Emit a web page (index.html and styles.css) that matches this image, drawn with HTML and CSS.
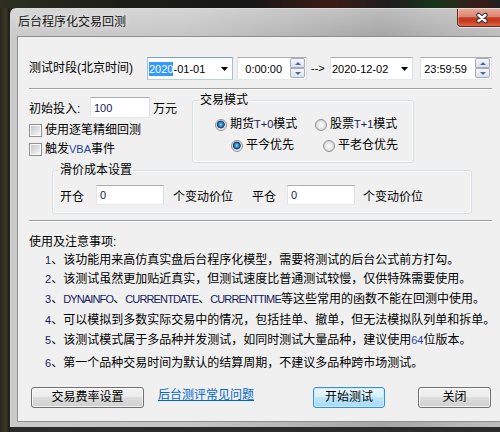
FILE: index.html
```html
<!DOCTYPE html>
<html lang="zh-CN">
<head>
<meta charset="utf-8">
<title>后台程序化交易回测</title>
<link rel="stylesheet" href="styles.css">
</head>
<body>
<div class="desk">
  <div class="win">
    <div class="titlebar">
      <span class="title">后台程序化交易回测</span>
      <div class="close">
        <svg width="14" height="12" viewBox="0 0 14 12"><path d="M3.5 3L10.5 9M10.5 3L3.5 9" stroke="#3a3a3a" stroke-width="4.6" stroke-linecap="round" fill="none"/><path d="M3.5 3L10.5 9M10.5 3L3.5 9" stroke="#ffffff" stroke-width="2.4" stroke-linecap="round" fill="none"/></svg>
      </div>
    </div>
    <div class="client">
      <div class="row1">
        <span class="lbl">测试时段(北京时间)</span>
        <div class="box dt dt1"><span class="en"><span class="sel">2020</span>-01-01</span><svg class="dd" width="7" height="4" viewBox="0 0 7 4"><path d="M0 0H7L3.5 4Z" fill="#000"/></svg></div>
        <div class="box tm tm1"><span class="en t">0:00:00</span><div class="spin"><div class="up"></div><div class="dn"></div></div></div>
        <span class="en to">--&gt;</span>
        <div class="box dt dt2"><span class="en">2020-12-02</span><svg class="dd" width="7" height="4" viewBox="0 0 7 4"><path d="M0 0H7L3.5 4Z" fill="#000"/></svg></div>
        <div class="box tm tm2"><span class="en t">23:59:59</span><div class="spin"><div class="up"></div><div class="dn"></div></div></div>
      </div>
      <div class="sep s1"></div>
      <div class="row2">
        <div class="left">
          <div class="invest">
            <span class="lbl2">初始投入:</span>
            <div class="box inp w60"><span class="en nv">100</span></div>
            <span class="unit">万元</span>
          </div>
          <div class="chk first"><span class="cb"></span><span>使用逐笔精细回测</span></div>
          <div class="chk"><span class="cb"></span><span>触发<span class="en vba">VBA</span>事件</span></div>
        </div>
        <div class="group g1">
          <span class="gt">交易模式</span>
          <div class="rrow r1">
            <span class="ri w100"><span class="rd on"></span>期货<span class="en nv">T+0</span>模式</span>
            <span class="ri"><span class="rd"></span>股票<span class="en nv">T+1</span>模式</span>
          </div>
          <div class="rrow r2">
            <span class="ri w92"><span class="rd on"></span>平今优先</span>
            <span class="ri"><span class="rd"></span>平老仓优先</span>
          </div>
        </div>
      </div>
      <div class="group g2">
        <span class="gt">滑价成本设置</span>
        <div class="grow">
          <span>开仓</span>
          <div class="box inp inp2 m12"><span class="en nv">0</span></div>
          <span class="m9">个变动价位</span>
          <span class="m19">平仓</span>
          <div class="box inp inp2 m11"><span class="en nv">0</span></div>
          <span class="m8">个变动价位</span>
        </div>
      </div>
      <div class="sep s2"></div>
      <div class="notes">
        <div class="nh">使用及注意事项:</div>
        <div class="nl l1"><span class="en nv">1</span>、该功能用来高仿真实盘后台程序化模型，需要将测试的后台公式前方打勾。</div>
        <div class="nl l2"><span class="en nv">2</span>、该测试虽然更加贴近真实，但测试速度比普通测试较慢，仅供特殊需要使用。</div>
        <div class="nl l3"><span class="en nv">3</span>、<span class="en nv caps">DYNAINFO</span>、<span class="en nv caps">CURRENTDATE</span>、<span class="en nv caps">CURRENTTIME</span>等这些常用的函数不能在回测中使用。</div>
        <div class="nl l4"><span class="en nv">4</span>、可以模拟到多数实际交易中的情况，包括挂单、撤单，但无法模拟队列单和拆单。</div>
        <div class="nl l5"><span class="en nv">5</span>、该测试模式属于多品种并发测试，如同时测试大量品种，建议使用<span class="en vba">64</span>位版本。</div>
        <div class="nl l6"><span class="en nv">6</span>、第一个品种交易时间为默认的结算周期，不建议多品种跨市场测试。</div>
      </div>
      <div class="btns">
        <div class="btn b1">交易费率设置</div>
        <span class="link">后台测评常见问题</span>
        <div class="btn def b2">开始测试</div>
        <div class="btn b3">关闭</div>
      </div>
    </div>
  </div>
</div>
</body>
</html>
```
FILE: styles.css
```css
* { box-sizing: border-box; }
html, body { margin: 0; padding: 0; }
body {
  width: 500px;
  height: 432px;
  overflow: hidden;
  background: #2a2a2a;
  font-family: "Liberation Sans", "Noto Sans CJK SC", sans-serif;
  font-size: 12px;
  color: #000;
}
.desk {
  height: 432px;
  padding: 8px 0 0 10px;
  background:
    linear-gradient(90deg, #2c2f22 0%, #1c1d17 25%, #171717 50%, #3b1c17 66%, #1d1d1d 78%, #17351c 87%, #3a1a16 96%, #1f1f1f 100%) left top / 100% 8px no-repeat,
    linear-gradient(90deg, #262519 0%, #3a3826 55%, #1b1b15 100%) left top / 10px 100% no-repeat,
    #2b2b2b;
}
.win {
  width: 496px;
  height: 419px;
  border-top: 1px solid #dcdcdc;
  border-left: 1px solid #d8d8d8;
  border-radius: 6px 0 0 0;
  background:
    linear-gradient(180deg, rgba(255,255,255,0.25), rgba(255,255,255,0) 27px),
    linear-gradient(90deg, #cacaca 0%, #c6c6c6 35%, #b7b7b7 55%, #a6a6a6 75%, #b4b4b4 88%, #bebebe 100%);
}
.titlebar {
  height: 27px;
  display: flex;
  align-items: flex-start;
  padding-left: 7px;
}
.title {
  flex: 1;
  line-height: 27px;
  color: #141414;
  text-shadow: 0 0 6px rgba(255,255,255,0.85);
}
.close {
  width: 49px;
  height: 18px;
  display: flex;
  align-items: center;
  justify-content: center;
  border: 1px solid #5b2c22;
  border-top: none;
  border-radius: 0 0 0 4px;
  background: linear-gradient(180deg, #eaa896 0%, #d98571 45%, #c23b1f 52%, #c6391c 70%, #e06444 100%);
  box-shadow: 0 1px 0 rgba(255,255,255,0.6), inset 1px 0 0 rgba(255,255,255,0.35);
}
.client {
  margin-left: 6px;
  height: 386px;
  border: 1px solid #8e8f8f;
  background: #f0f0f0;
  padding: 20px 13px 0 11px;
}
.en { font-family: "Liberation Sans", sans-serif; font-size: 11px; }
.nv { color: #16205e; }
.vba { color: #1f3fa8; }
.row1 { display: flex; align-items: center; height: 23px; }
.lbl { width: 118px; flex: none; line-height: 23px; }
.box {
  background: #fff;
  border: 1px solid;
  border-color: #abadb3 #dbdfe6 #e3e9ef #e2e3ea;
  height: 23px;
  display: flex;
  align-items: center;
  flex: none;
}
.dt { padding-left: 1px; }
.dt1 { width: 86px; border-color: #7da2ce #a4bfdf #b8cfe8 #a4bfdf; }
.dt2 { width: 83px; }
.dd { margin-left: auto; margin-right: 4px; }
.sel { background: #3399ff; color: #fff; display: inline-block; line-height: 14px; }
.tm { justify-content: flex-end; }
.tm .t { margin-right: 8px; }
.tm1 { margin-left: 4px; width: 70px; }
.tm2 { margin-left: 7px; width: 72px; }
.to { width: 15px; margin: 0 4px; line-height: 23px; flex: none; }
.spin {
  align-self: flex-start;
  width: 15px;
  height: 20px;
  margin-right: 1px;
  display: flex;
  flex-direction: column;
}
.spin div {
  height: 10px;
  border: 1px solid #a7acb6;
  background: linear-gradient(180deg, #f5f7fa, #dbe1e9);
  display: flex;
  align-items: center;
  justify-content: center;
}
.spin .up { border-radius: 2px 2px 0 0; }
.spin .dn { border-radius: 0 0 2px 2px; }
.spin .up::after {
  content: "";
  border-left: 3px solid transparent;
  border-right: 3px solid transparent;
  border-bottom: 3px solid #4e6a9a;
}
.spin .dn::after {
  content: "";
  border-left: 3px solid transparent;
  border-right: 3px solid transparent;
  border-top: 3px solid #4e6a9a;
}
.sep { height: 2px; border-top: 1px solid #a0a0a0; border-bottom: 1px solid #fff; }
.s1 { margin-top: 8px; }
.s2 { margin-top: 6px; }
.row2 { display: flex; align-items: flex-start; }
.left { width: 163px; flex: none; padding-top: 7px; }
.invest { display: flex; align-items: center; height: 21px; }
.lbl2 { width: 61px; flex: none; }
.inp { height: 21px; padding-left: 3px; }
.w60 { width: 60px; }
.unit { margin-left: 3px; }
.chk { display: flex; align-items: flex-start; height: 19px; line-height: 19px; }
.chk.first { margin-top: 3px; }
.cb {
  width: 13px;
  height: 13px;
  flex: none;
  margin-top: 3px;
  margin-right: 3px;
  border: 1px solid #8e8f8f;
  padding: 1px;
  background: linear-gradient(135deg, #c3c7cd, #f6f6f6) content-box, #fcfcfc;
}
.group {
  border: 1px solid #d5dfe5;
  border-radius: 3px;
  box-shadow: inset 0 0 0 1px #fbfbfb;
  display: flex;
  flex-direction: column;
}
.gt {
  align-self: flex-start;
  line-height: 16px;
  margin: -9px 0 0 6px;
  padding: 0 1px;
  background: #f0f0f0;
}
.g1 { width: 222px; flex: none; margin-top: 10px; padding-bottom: 6px; }
.rrow { display: flex; align-items: center; height: 21px; line-height: 21px; }
.r1 { margin-top: 6px; padding-left: 22px; }
.r2 { padding-left: 38px; }
.ri { display: flex; align-items: center; flex: none; }
.w100 { width: 100px; }
.w92 { width: 92px; }
.rd {
  width: 12px;
  height: 12px;
  flex: none;
  margin-right: 3px;
  border-radius: 50%;
  border: 1px solid #909396;
  background: radial-gradient(circle at 50% 50%, #fbfbfb 0, #f2f2f2 2px, #d6d8db 5px);
}
.rd.on {
  background: radial-gradient(circle at 48% 45%, #a6def8 0, #3b95d2 1.6px, #1b5a92 3px, #14406d 3.6px, #cfd4da 4.2px, #f3f3f3 5.5px);
}
.g2 { margin: 7px 0 0 23px; width: 420px; padding-bottom: 8px; }
.grow { display: flex; align-items: center; height: 20px; margin-top: 7px; padding-left: 7px; }
.inp2 { width: 68px; height: 20px; }
.m12 { margin-left: 12px; }
.m9 { margin-left: 9px; }
.m19 { margin-left: 19px; }
.m11 { margin-left: 11px; }
.m8 { margin-left: 8px; }
.nh { margin-top: 11px; line-height: 18px; }
.nl { line-height: 18px; padding-left: 16px; white-space: nowrap; }
.caps { letter-spacing: -0.85px; }
.l2 { margin-top: 1px; }
.l3 { margin-top: 2px; }
.l4 { margin-top: 3px; }
.l5 { margin-top: 2px; }
.l6 { margin-top: 5px; }
.btns { display: flex; align-items: flex-start; margin-top: 15px; }
.btn {
  height: 21px;
  flex: none;
  display: flex;
  align-items: center;
  justify-content: center;
  border: 1px solid #707070;
  border-radius: 3px;
  background: linear-gradient(180deg, #f2f2f2 0%, #ebebeb 49%, #dddddd 50%, #cfcfcf 100%);
  box-shadow: inset 0 0 0 1px rgba(255,255,255,0.75);
  line-height: 19px;
}
.btn.def {
  border-color: #3c8fd0;
  background: linear-gradient(180deg, #eaf6fd 0%, #d9f0fc 49%, #bee6fd 50%, #a7d9f5 100%);
  box-shadow: inset 0 0 0 1px #c6ecfc;
}
.b1 { width: 113px; margin-left: 2px; }
.link { margin-left: 14px; line-height: 16px; color: #0066cc; text-decoration: underline; }
.b2 { width: 72px; margin-left: auto; margin-right: 33px; }
.b3 { width: 73px; margin-right: 1px; }
```
